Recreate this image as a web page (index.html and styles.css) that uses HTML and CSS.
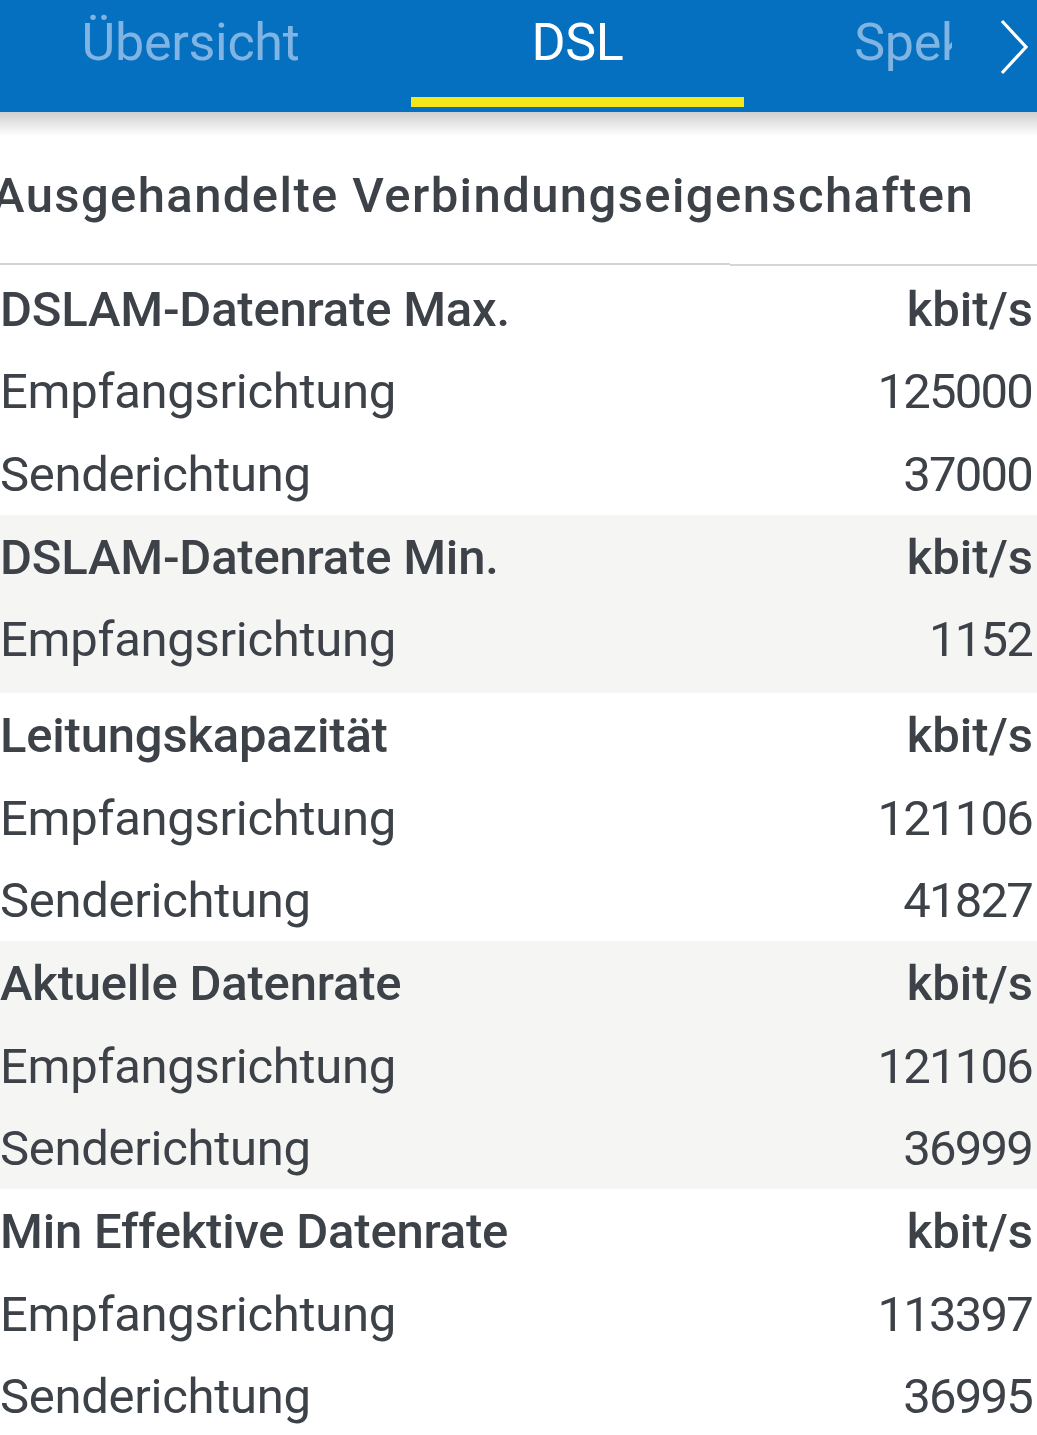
FILE: index.html
```html
<!DOCTYPE html>
<html lang="de">
<head>
<meta charset="utf-8">
<title>DSL</title>
<link rel="stylesheet" href="styles.css">
</head>
<body>
<header class="tabbar">
  <nav class="tabs">
    <div class="tab"><span class="tab-label">Übersicht</span><span class="tab-ind"></span></div>
    <div class="tab tab-active"><span class="tab-label">DSL</span><span class="tab-ind"></span></div>
    <div class="tab"><span class="tab-label">Spektrum</span><span class="tab-ind"></span></div>
  </nav>
  <div class="tab-next">
    <svg width="30" height="56" viewBox="0 0 30 56"><path d="M3 2 L27 28 L3 54" fill="none" stroke="#fff" stroke-width="3.2"/></svg>
  </div>
</header>
<main class="content">
  <h1 class="title">Ausgehandelte Verbindungseigenschaften</h1>
  <div class="divider"><span class="div-l"></span><span class="div-r"></span></div>

  <section class="group">
    <div class="row head"><span class="lbl">DSLAM-Datenrate Max.</span><span class="unit">kbit/s</span></div>
    <div class="row"><span class="lbl">Empfangsrichtung</span><span class="val">125000</span></div>
    <div class="row"><span class="lbl">Senderichtung</span><span class="val">37000</span></div>
  </section>
  <section class="group alt extra">
    <div class="row head"><span class="lbl">DSLAM-Datenrate Min.</span><span class="unit">kbit/s</span></div>
    <div class="row"><span class="lbl">Empfangsrichtung</span><span class="val">1152</span></div>
  </section>
  <section class="group">
    <div class="row head"><span class="lbl">Leitungskapazität</span><span class="unit">kbit/s</span></div>
    <div class="row"><span class="lbl">Empfangsrichtung</span><span class="val">121106</span></div>
    <div class="row"><span class="lbl">Senderichtung</span><span class="val">41827</span></div>
  </section>
  <section class="group alt">
    <div class="row head"><span class="lbl">Aktuelle Datenrate</span><span class="unit">kbit/s</span></div>
    <div class="row"><span class="lbl">Empfangsrichtung</span><span class="val">121106</span></div>
    <div class="row"><span class="lbl">Senderichtung</span><span class="val">36999</span></div>
  </section>
  <section class="group">
    <div class="row head"><span class="lbl">Min Effektive Datenrate</span><span class="unit">kbit/s</span></div>
    <div class="row"><span class="lbl">Empfangsrichtung</span><span class="val">113397</span></div>
    <div class="row"><span class="lbl">Senderichtung</span><span class="val">36995</span></div>
  </section>
</main>
</body>
</html>
```
FILE: styles.css
```css
html, body {
  margin: 0;
  padding: 0;
  background: #ffffff;
}
body {
  width: 1037px;
  overflow: hidden;
  font-family: Roboto, "Noto Sans", sans-serif;
  color: #3d4148;
}
.tabbar {
  position: relative;
  height: 112px;
  background: #0670c0;
  z-index: 2;
}
.tabbar::after {
  content: "";
  position: absolute;
  left: 0;
  right: 0;
  top: 100%;
  height: 24px;
  background: linear-gradient(#cfcfcf, rgba(255,255,255,0));
}
.tabs {
  display: flex;
  margin-left: -3px;
  height: 112px;
  overflow: hidden;
}
.tab {
  flex: 0 0 387px;
  display: flex;
  flex-direction: column;
  align-items: center;
  box-sizing: border-box;
  padding-top: 17px;
}
.tab-label {
  font-size: 52px;
  line-height: 1;
  letter-spacing: -0.3px;
  color: #80b4e2;
  white-space: nowrap;
}
.tab-active .tab-label {
  color: #ffffff;
}
.tab-ind {
  align-self: stretch;
  margin: 28px 27px 0 27px;
  height: 10px;
}
.tab-active .tab-ind {
  background: #f4e81a;
}
.tab-next {
  position: absolute;
  top: 0;
  right: 0;
  width: 85px;
  height: 112px;
  background: #0670c0;
  display: flex;
  align-items: flex-start;
  justify-content: flex-end;
  padding-top: 19px;
  padding-right: 8px;
  box-sizing: border-box;
}
.content {
  display: flex;
  flex-direction: column;
}
.title {
  margin: 0 0 0 -8px;
  padding: 59px 0 43px 0;
  font-size: 49px;
  line-height: 1;
  font-weight: 500;
  letter-spacing: 1.4px;
  white-space: nowrap;
  color: #3d4148;
}
.divider {
  display: flex;
  height: 4px;
}
.div-l {
  flex: 0 0 730px;
  height: 2px;
  background: #d2d2d0;
}
.div-r {
  flex: 1;
  margin-top: 1px;
  height: 2px;
  background: #d6d6d4;
}
.group {
  display: flex;
  flex-direction: column;
}
.group.alt {
  background: #f5f5f4;
}
.group.extra {
  padding-bottom: 13px;
}
.row {
  height: 82.67px;
  box-sizing: border-box;
  padding: 2px 4px 0 0;
  display: flex;
  align-items: center;
  justify-content: space-between;
  font-size: 49px;
  line-height: 1;
  white-space: nowrap;
}
.row .lbl {
  letter-spacing: -0.3px;
}
.row .val {
  letter-spacing: -1.8px;
  margin-right: 1px;
}
.row.head {
  font-weight: 500;
}
.row.head .lbl {
  letter-spacing: -0.2px;
}
```
